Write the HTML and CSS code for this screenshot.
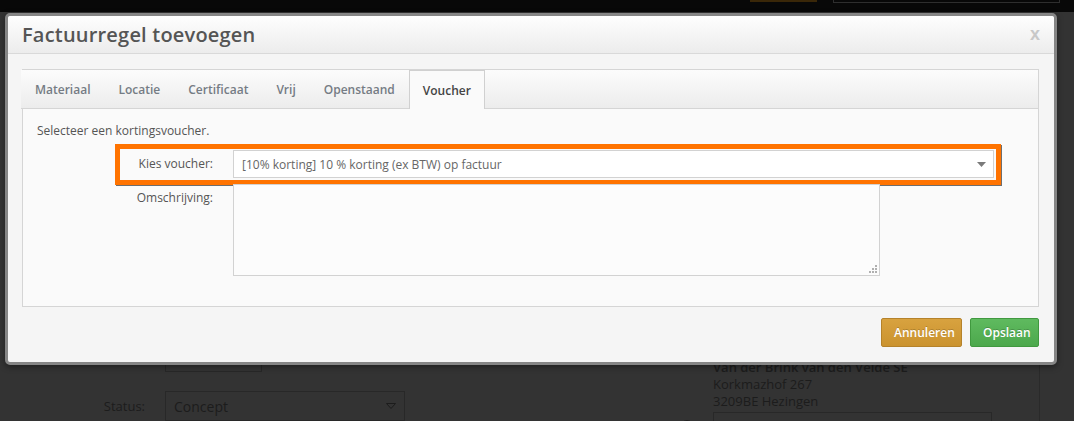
FILE: index.html
```html
<!DOCTYPE html>
<html lang="nl">
<head>
    <meta charset="UTF-8">
    <meta name="viewport" content="width=device-width, initial-scale=1.0">
    <title>Factuurregel toevoegen</title>
    <link rel="stylesheet" href="styles.css">
</head>
<body>
    <!-- Page behind the dialog (dimmed) -->
    <div class="page">
        <div class="topbar">
            <div class="topbar-btn"></div>
            <div class="topbar-search"></div>
        </div>

        <div class="page-main">
            <div class="form-col">
                <div class="bg-row">
                    <span class="bg-label"></span>
                    <div class="bg-field bg-field-short"></div>
                </div>
                <div class="bg-row">
                    <span class="bg-label">Status:</span>
                    <div class="bg-field bg-select">
                        <span>Concept</span>
                        <svg width="10" height="6" viewBox="0 0 10 6"><path d="M0.5 0.5h9L5 5.5z" fill="none" stroke="#1c1c1c" stroke-width="1"/></svg>
                    </div>
                </div>
            </div>

            <div class="client-col">
                <div class="address">
                    <strong>Van der Brink van den Velde SE</strong><br>
                    Korkmazhof 267<br>
                    3209BE Hezingen
                </div>
                <div class="input-row">
                    <span class="help-icon"></span>
                    <div class="bg-field bg-input"></div>
                </div>
            </div>
        </div>
    </div>

    <!-- Dialog -->
    <div class="modal">
        <div class="modal-header">
            <h3>Factuurregel toevoegen</h3>
            <span class="close">x</span>
        </div>

        <div class="modal-body">
            <div class="tabs">
                <ul class="tab-nav">
                    <li>Materiaal</li>
                    <li>Locatie</li>
                    <li>Certificaat</li>
                    <li>Vrij</li>
                    <li>Openstaand</li>
                    <li class="active">Voucher</li>
                </ul>

                <div class="tab-pane">
                    <p class="intro">Selecteer een kortingsvoucher.</p>

                    <div class="form-row form-row-select">
                        <label for="voucher">Kies voucher:</label>
                        <div class="select" id="voucher">
                            <span>[10% korting] 10 % korting (ex BTW) op factuur</span>
                            <svg width="9" height="5" viewBox="0 0 9 5"><path d="M0 0h9L4.5 5z" fill="#7a7a7a"/></svg>
                        </div>
                        <div class="highlight"></div>
                    </div>

                    <div class="form-row form-row-text">
                        <label for="omschrijving">Omschrijving:</label>
                        <div class="textarea-wrap">
                            <textarea id="omschrijving"></textarea>
                            <svg class="grip" width="8" height="8" viewBox="0 0 8 8">
                                <rect x="6" y="0" width="2" height="2"/>
                                <rect x="3" y="3" width="2" height="2"/>
                                <rect x="6" y="3" width="2" height="2"/>
                                <rect x="0" y="6" width="2" height="2"/>
                                <rect x="3" y="6" width="2" height="2"/>
                                <rect x="6" y="6" width="2" height="2"/>
                            </svg>
                        </div>
                    </div>
                </div>
            </div>

            <div class="modal-footer">
                <button class="btn btn-cancel">Annuleren</button>
                <button class="btn btn-save">Opslaan</button>
            </div>
        </div>
    </div>
</body>
</html>
```

FILE: styles.css
```css
* {
    margin: 0;
    padding: 0;
    box-sizing: border-box;
    font-family: 'Open Sans', 'Liberation Sans', sans-serif;
}

body {
    width: 1074px;
    height: 421px;
    overflow: hidden;
    background-color: #333;
    position: relative;
}

/* Dimmed page */
.page {
    color: #1c1c1c;
    font-size: 13px;
}

.topbar {
    height: 12px;
    background-color: #080808;
    display: flex;
    justify-content: flex-end;
    align-items: flex-start;
    padding-right: 14px;
}

.topbar-btn {
    width: 67px;
    height: 2px;
    background-color: #3a2708;
}

.topbar-search {
    width: 227px;
    height: 3px;
    margin-left: 16px;
    border: 1px solid #2e2e2e;
    border-top: none;
}

.page-main {
    display: grid;
    grid-template-columns: 680px 360px;
    padding-top: 331px;
}

.form-col {
    display: flex;
    flex-direction: column;
    gap: 19px;
}

.bg-row {
    display: grid;
    grid-template-columns: 145px 240px;
    gap: 20px;
    align-items: center;
}

.bg-label {
    text-align: right;
}

.bg-field {
    border: 1px solid #282828;
    height: 30px;
}

.bg-field-short {
    width: 97px;
    height: 29px;
}

.bg-select {
    display: flex;
    justify-content: space-between;
    align-items: center;
    padding: 0 8px 0 8px;
    font-size: 14px;
}

.client-col {
    padding-top: 16px;
    border-right: 1px solid #2a2a2a;
}

.address {
    margin-left: 33px;
    line-height: 17px;
}

.address strong {
    font-weight: 600;
}

.input-row {
    display: flex;
    align-items: center;
    gap: 19px;
    margin-top: 2px;
}

.help-icon {
    width: 14px;
    height: 14px;
    border: 1px solid #222;
    border-radius: 50%;
}

.bg-input {
    width: 279px;
}

/* Dialog */
.modal {
    position: absolute;
    left: 5px;
    top: 13px;
    width: 1052px;
    height: 352px;
    background-color: #f5f5f5;
    border: 3px solid #858585;
    border-radius: 5px;
    box-shadow: 0 2px 6px rgba(0, 0, 0, 0.4);
}

.modal-header {
    height: 38px;
    display: flex;
    justify-content: space-between;
    align-items: center;
    padding: 0 14px;
    border-bottom: 1px solid #d9d9d9;
    background: linear-gradient(#fefefe, #ececec);
    border-radius: 3px 3px 0 0;
}

.modal-header h3 {
    font-size: 20px;
    font-weight: 600;
    color: #555;
    letter-spacing: 0.2px;
}

.close {
    font-family: 'Liberation Sans', sans-serif;
    font-size: 18px;
    font-weight: bold;
    color: #c8c8c8;
}

.modal-body {
    padding: 15px 15px 0 14px;
}

.tabs {
    border: 1px solid #d5d5d5;
    background-color: #fafafa;
}

.tab-nav {
    list-style: none;
    display: flex;
    height: 39px;
    padding-left: 0;
    margin-left: -2px;
    border-bottom: 1px solid #d5d5d5;
    background: linear-gradient(#fcfcfc, #ececec);
}

.tab-nav li {
    display: flex;
    align-items: center;
    padding: 0 13px;
    border: 1px solid transparent;
    border-bottom: none;
    font-size: 12px;
    font-weight: 600;
    color: #757c84;
}

.tab-nav li.active {
    height: 39px;
    background-color: #fafafa;
    border-color: #d0d0d0;
    color: #444;
}

.tab-pane {
    padding: 13px 14px 30px;
    font-size: 12px;
    color: #555;
}

.intro {
    line-height: 18px;
    margin-bottom: 10px;
}

.form-row {
    display: grid;
    grid-template-columns: 176px 761px;
    gap: 20px;
    width: max-content;
    position: relative;
}

.form-row label {
    text-align: right;
    line-height: 18px;
}

.form-row-select {
    align-items: center;
}

.form-row-text {
    margin-top: 6px;
    align-items: start;
}

.form-row-text label {
    padding-top: 5px;
}

.select {
    height: 28px;
    display: flex;
    justify-content: space-between;
    align-items: center;
    padding: 0 7px 0 8px;
    background-color: #fff;
    border: 1px solid #d2d2d2;
    color: #666;
}

/* orange marker round the voucher row */
.highlight {
    position: absolute;
    left: 78px;
    right: -7px;
    top: -6px;
    bottom: -7px;
    border: 5px solid #ff7300;
    box-shadow: 1px 1px 0 #6e6e6e;
    pointer-events: none;
}

.textarea-wrap {
    position: relative;
    width: 647px;
    height: 92px;
}

textarea {
    display: block;
    width: 100%;
    height: 100%;
    resize: none;
    background-color: #fcfcfc;
    border: 1px solid #d2d2d2;
}

.grip {
    position: absolute;
    right: 3px;
    bottom: 3px;
    fill: #b0b0b0;
}

.modal-footer {
    display: flex;
    justify-content: flex-end;
    gap: 8px;
    margin-top: 11px;
}

.btn {
    height: 29px;
    padding: 0 12px;
    border-radius: 2px;
    font-size: 12px;
    font-weight: 600;
    color: white;
    text-shadow: 0 -1px 0 rgba(0, 0, 0, 0.2);
    cursor: pointer;
}

.btn-cancel {
    width: 81px;
    background: linear-gradient(#d8a23f, #cb932f);
    border: 1px solid #b5822a;
}

.btn-save {
    width: 69px;
    background: linear-gradient(#5fba5f, #4ca84c);
    border: 1px solid #40993f;
}
```
